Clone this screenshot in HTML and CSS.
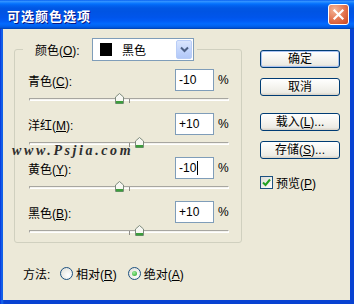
FILE: index.html
```html
<!DOCTYPE html>
<html lang="zh-CN">
<head>
    <meta charset="UTF-8">
    <title>可选颜色选项</title>
    <link rel="stylesheet" href="styles.css">
</head>
<body>
    <div class="window">
        <div class="titlebar">
            <span class="title">可选颜色选项</span>
            <span class="close">
                <svg width="13" height="13" viewBox="0 0 13 13"><path d="M2.5 2.5 L10.5 10.5 M10.5 2.5 L2.5 10.5" stroke="#fff" stroke-width="2.2" stroke-linecap="square"/></svg>
            </span>
        </div>
        <div class="content">
            <div class="left">
                <div class="group">
                    <div class="group-head">
                        <span class="head-label">颜色(<u>O</u>):</span>
                        <div class="select">
                            <span class="swatch"></span>
                            <span class="select-text">黑色</span>
                            <span class="select-btn">
                                <svg width="9" height="7" viewBox="0 0 9 7"><path d="M1 1.5 L4.5 5 L8 1.5" fill="none" stroke="#4d6185" stroke-width="2"/></svg>
                            </span>
                        </div>
                    </div>

                    <div class="row">
                        <span class="label">青色(<u>C</u>):</span>
                        <span class="field">-10</span>
                        <span class="pct">%</span>
                    </div>
                    <div class="slider">
                        <div class="track"></div>
                        <span class="tick"></span>
                        <svg class="thumb" style="left: calc(45% - 4px)" width="9" height="11" viewBox="0 0 9 11"><path d="M0.5 4 L4.5 0.5 L8.5 4 L8.5 10.5 L0.5 10.5 Z" fill="#f7f7f2" stroke="#7d8b7d"/><rect x="1" y="8" width="7" height="2.5" fill="#3d9d3d"/></svg>
                    </div>

                    <div class="row">
                        <span class="label">洋红(<u>M</u>):</span>
                        <span class="field">+10</span>
                        <span class="pct">%</span>
                    </div>
                    <div class="slider">
                        <div class="track"></div>
                        <span class="tick"></span>
                        <svg class="thumb" style="left: calc(55% - 4px)" width="9" height="11" viewBox="0 0 9 11"><path d="M0.5 4 L4.5 0.5 L8.5 4 L8.5 10.5 L0.5 10.5 Z" fill="#f7f7f2" stroke="#7d8b7d"/><rect x="1" y="8" width="7" height="2.5" fill="#3d9d3d"/></svg>
                    </div>

                    <div class="row">
                        <span class="label">黄色(<u>Y</u>):</span>
                        <span class="field">-10<span class="caret"></span></span>
                        <span class="pct">%</span>
                    </div>
                    <div class="slider">
                        <div class="track"></div>
                        <span class="tick"></span>
                        <svg class="thumb" style="left: calc(45% - 4px)" width="9" height="11" viewBox="0 0 9 11"><path d="M0.5 4 L4.5 0.5 L8.5 4 L8.5 10.5 L0.5 10.5 Z" fill="#f7f7f2" stroke="#7d8b7d"/><rect x="1" y="8" width="7" height="2.5" fill="#3d9d3d"/></svg>
                    </div>

                    <div class="row">
                        <span class="label">黑色(<u>B</u>):</span>
                        <span class="field">+10</span>
                        <span class="pct">%</span>
                    </div>
                    <div class="slider last">
                        <div class="track"></div>
                        <span class="tick"></span>
                        <svg class="thumb" style="left: calc(55% - 4px)" width="9" height="11" viewBox="0 0 9 11"><path d="M0.5 4 L4.5 0.5 L8.5 4 L8.5 10.5 L0.5 10.5 Z" fill="#f7f7f2" stroke="#7d8b7d"/><rect x="1" y="8" width="7" height="2.5" fill="#3d9d3d"/></svg>
                    </div>
                </div>

                <div class="method">
                    <span class="method-label">方法:</span>
                    <span class="radio"></span>
                    <span class="radio-text">相对(<u>R</u>)</span>
                    <span class="radio checked"><span class="dot"></span></span>
                    <span class="radio-text">绝对(<u>A</u>)</span>
                </div>
            </div>

            <div class="right">
                <button class="btn default">确定</button>
                <button class="btn">取消</button>
                <button class="btn gap">载入(<u>L</u>)...</button>
                <button class="btn">存储(<u>S</u>)...</button>
                <div class="check-row">
                    <span class="checkbox">
                        <svg width="9" height="9" viewBox="0 0 9 9"><path d="M1 4.5 L3.5 7 L8 1.5" fill="none" stroke="#21a121" stroke-width="2"/></svg>
                    </span>
                    <span>预览(<u>P</u>)</span>
                </div>
            </div>
        </div>
        <!-- watermark sits over the dialog -->
        <div class="watermark">www.Psjia.com</div>
    </div>
</body>
</html>
```

FILE: styles.css
```css
* {
    margin: 0;
    padding: 0;
    box-sizing: border-box;
}
body {
    background: #ece9d8;
    font-family: "Liberation Sans", "Noto Sans CJK SC", sans-serif;
    font-size: 12px;
    color: #000;
}
u {
    text-underline-offset: 1px;
}
.window {
    position: relative;
    width: 354px;
    height: 304px;
    display: flex;
    flex-direction: column;
    background: linear-gradient(90deg, #0831d9, #166aee 2px, #0842d2 4px);
}
.titlebar {
    height: 29px;
    display: flex;
    align-items: center;
    justify-content: space-between;
    padding: 0 5px 0 7px;
    background: linear-gradient(#0058ee 0%, #3593ff 4%, #288eff 7%, #127dff 10%, #036ffc 14%, #0262ee 20%, #0057e5 28%, #0054e3 40%, #0055eb 60%, #005bf5 72%, #026afe 82%, #0062ef 90%, #0052d6 96%, #0040ab 100%);
}
.title {
    color: #fff;
    font-family: "Noto Sans CJK SC", sans-serif;
    font-weight: bold;
    font-size: 13px;
    letter-spacing: 1px;
    text-shadow: 1px 1px 0 #0a1883;
    margin-top: 1px;
}
.close {
    width: 21px;
    height: 21px;
    border: 1px solid #fff;
    border-radius: 3px;
    background: radial-gradient(circle at 30% 25%, #f4b598, #e2714c 55%, #c8451f);
    display: flex;
    align-items: center;
    justify-content: center;
}
.content {
    flex: 1;
    margin: 0 4px 4px 3px;
    background: #ece9d8;
    display: flex;
    padding: 0 10px 0 11px;
}
.left {
    width: 228px;
}
.group {
    margin-top: 20px;
    border: 1px solid #d0d0bf;
    border-radius: 3px;
}
.group-head {
    display: flex;
    align-items: center;
    width: fit-content;
    height: 23px;
    margin: -12px 0 8px 8px;
    padding: 0 3px 0 12px;
    background: #ece9d8;
}
.head-label {
    width: 57px;
    flex-shrink: 0;
}
.select {
    width: 102px;
    height: 23px;
    border: 1px solid #7f9db9;
    background: #fff;
    display: flex;
    align-items: center;
    padding-left: 7px;
}
.swatch {
    width: 12px;
    height: 13px;
    background: #000;
}
.select-text {
    margin-left: 10px;
    flex: 1;
}
.select-btn {
    width: 16px;
    height: 19px;
    margin-right: 1px;
    border: 1px solid #b9cdf7;
    border-radius: 2px;
    background: linear-gradient(#dbe6fd, #c0d3fb 60%, #b2c8f8);
    display: flex;
    align-items: center;
    justify-content: center;
}
.row {
    height: 22px;
    display: flex;
    align-items: center;
    padding: 0 12px 0 13px;
}
.label {
    flex: 1;
}
.field {
    width: 39px;
    height: 22px;
    border: 1px solid #7f9db9;
    background: #fff;
    display: flex;
    align-items: center;
    padding-left: 3px;
}
.caret {
    display: inline-block;
    width: 1px;
    height: 14px;
    background: #000;
    margin-left: 1px;
}
.pct {
    margin-left: 4px;
    width: 11px;
}
.slider {
    position: relative;
    height: 22px;
    margin: 0 12px 0 14px;
}
.slider.last {
    height: 19px;
}
.track {
    position: relative;
    top: 7px;
    height: 3px;
    border-top: 1px solid #a7a6a0;
    border-left: 1px solid #a7a6a0;
    border-bottom: 1px solid #fff;
    border-right: 1px solid #fff;
    background: #f4f3ee;
}
.tick {
    position: absolute;
    left: 50%;
    top: 8px;
    width: 1px;
    height: 4px;
    background: #8e8d88;
}
.thumb {
    position: absolute;
    top: 2px;
}
.method {
    display: flex;
    align-items: center;
    height: 16px;
    margin: 22px 0 0 9px;
}
.method-label {
    width: 37px;
}
.radio {
    width: 13px;
    height: 13px;
    border: 1px solid #1c5180;
    border-radius: 50%;
    background: radial-gradient(circle at 65% 65%, #fff, #dcdcd4);
    display: flex;
    align-items: center;
    justify-content: center;
}
.dot {
    width: 5px;
    height: 5px;
    border-radius: 50%;
    background: radial-gradient(circle at 40% 35%, #9ff09f, #21a121);
}
.radio-text {
    margin: 0 11px 0 3px;
}
.right {
    width: 80px;
    margin: 21px 0 0 18px;
    display: flex;
    flex-direction: column;
}
.btn {
    height: 18px;
    margin-bottom: 10px;
    border: 1px solid #003c74;
    border-radius: 3px;
    background: linear-gradient(#fff, #f5f4ef 50%, #ecebe4 85%, #d6d0c5);
    font-family: "Liberation Sans", "Noto Sans CJK SC", sans-serif;
    font-size: 12px;
    color: #000;
    line-height: 14px;
}
.btn.default {
    box-shadow: inset 0 0 0 1px #a9c2f1;
}
.btn.gap {
    margin-top: 7px;
}
.check-row {
    display: flex;
    align-items: center;
    gap: 3px;
    margin-top: 7px;
    height: 13px;
}
.checkbox {
    width: 13px;
    height: 13px;
    border: 1px solid #1c5180;
    background: linear-gradient(135deg, #dcdcd4, #fff);
    display: flex;
    align-items: center;
    justify-content: center;
}
.watermark {
    position: absolute;
    left: 12px;
    top: 143px;
    font-family: "Liberation Serif", serif;
    font-weight: bold;
    font-style: italic;
    font-size: 14px;
    letter-spacing: 2.6px;
    color: #2e2e2e;
}
```
